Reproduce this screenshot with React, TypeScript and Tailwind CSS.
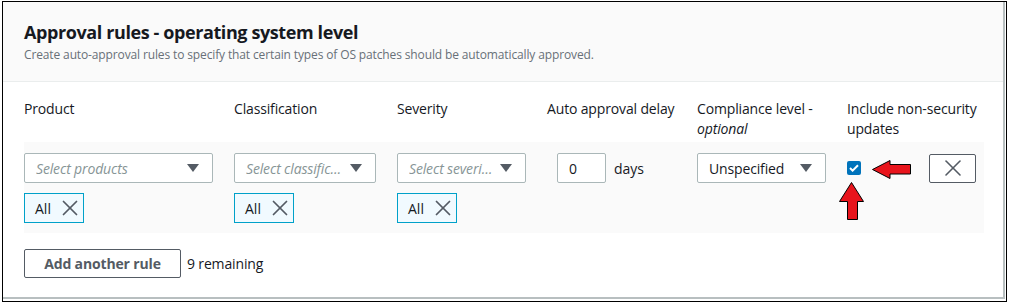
import { X } from "lucide-react";

const font = { fontFamily: '"Open Sans", "Noto Sans", sans-serif' };

const Caret = () => (
  <svg width="12" height="8" viewBox="0 0 12 8" className="shrink-0">
    <path d="M0 0h12L6 8z" fill="#545b64" />
  </svg>
);

const Select = ({ text, placeholder = true }: { text: string; placeholder?: boolean }) => (
  <div className="flex h-[30px] items-center gap-[6px] rounded-[2px] border border-[#aab7b8] bg-white pl-[11px] pr-[13px]">
    <span
      className={`min-w-0 flex-1 truncate text-[14px] tracking-[-0.15px] ${
        placeholder ? "italic text-[#879596]" : "text-[#16191f]"
      }`}
    >
      {text}
    </span>
    <Caret />
  </div>
);

const Token = () => (
  <div className="mt-[10px] flex h-[30px] w-[60px] items-center gap-[6px] border border-[#00a1c9] bg-[#f1faff] pl-[10px] text-[14px] text-[#16191f]">
    <span>All</span>
    <X size={26} strokeWidth={1.6} className="text-[#545b64]" />
  </div>
);

export default function App() {
  return (
    <div className="h-[305px] w-[1009px] bg-white pt-[1px] pl-[2px]" style={font}>
      <div className="h-[301px] w-[1005px] border border-black">
        <div className="relative h-[297px] w-[1002px] border-r-2 border-b-2 border-[#b8bfc0] bg-white">
          <div className="h-[80px] border-b border-[#eaeded] bg-[#fafafa] pl-[21px] pt-[19px]">
            <h2 className="text-[18px] font-bold leading-[22px] tracking-[-0.4px] text-[#16191f]">
              Approval rules - operating system level
            </h2>
            <p className="mt-[4px] text-[12px] leading-[16px] tracking-[-0.13px] text-[#687078]">
              Create auto-approval rules to specify that certain types of OS patches should be automatically approved.
            </p>
          </div>

          <div className="pl-[21px]">
            <div className="grid grid-cols-[189px_142px_129px_129px_129px_137px] gap-x-[21px] pt-[17px] text-[14px] leading-[20px] tracking-[-0.15px] text-[#16191f]">
              <div>Product</div>
              <div>Classification</div>
              <div>Severity</div>
              <div className="whitespace-nowrap">Auto approval delay</div>
              <div>
                Compliance level -<br />
                <i>optional</i>
              </div>
              <div>Include non-security updates</div>
            </div>

            <div className="mt-[3px] grid h-[91px] w-[960px] grid-cols-[189px_142px_129px_129px_129px_137px] gap-x-[21px] bg-[#fafafa] pt-[11px]">
              <div>
                <Select text="Select products" />
                <Token />
              </div>
              <div>
                <Select text="Select classifications" />
                <Token />
              </div>
              <div>
                <Select text="Select severities" />
                <Token />
              </div>
              <div className="flex h-[30px] items-center pl-[10px]">
                <div className="flex h-[30px] w-[49px] items-center rounded-[2px] border border-[#aab7b8] bg-white pl-[11px] text-[14px] text-[#16191f]">
                  0
                </div>
                <span className="ml-[8px] text-[14px] text-[#16191f]">days</span>
              </div>
              <div>
                <Select text="Unspecified" placeholder={false} />
              </div>
              <div className="relative flex h-[30px] items-center">
                <div className="mt-[-1px] flex h-[14px] w-[14px] items-center justify-center rounded-[2px] bg-[#0073bb]">
                  <svg width="10" height="8" viewBox="0 0 10 8">
                    <path d="M1 4l2.6 2.6L9 1.2" fill="none" stroke="white" strokeWidth="2" />
                  </svg>
                </div>
                <button className="ml-auto mr-[8px] flex h-[29px] w-[47px] items-center justify-center rounded-[2px] border border-[#545b64] bg-white">
                  <X size={28} strokeWidth={1.4} className="text-[#545b64]" />
                </button>
              </div>
            </div>

            <div className="mt-[16px] flex items-center">
              <button className="h-[29px] w-[157px] rounded-[2px] border border-[#545b64] bg-white text-[14px] font-bold tracking-[-0.15px] text-[#545b64]">
                Add another rule
              </button>
              <span className="ml-[6px] text-[14px] tracking-[-0.15px] text-[#16191f]">9 remaining</span>
            </div>
          </div>

          {/* red annotation arrows */}
          <svg className="absolute left-[868px] top-[156px]" width="42" height="22" viewBox="0 0 42 22">
            <path d="M1.5 11.5L19 2.5V6.5H39.5V16H19V20.5Z" fill="#e8141c" stroke="black" strokeWidth="1" />
          </svg>
          <svg className="absolute left-[835px] top-[179px]" width="28" height="40" viewBox="0 0 28 40">
            <path d="M13.5 1.5L25.5 20.5H19.5V38.5H9.5V20.5H1.5Z" fill="#e8141c" stroke="black" strokeWidth="1" />
          </svg>
        </div>
      </div>
    </div>
  );
}
